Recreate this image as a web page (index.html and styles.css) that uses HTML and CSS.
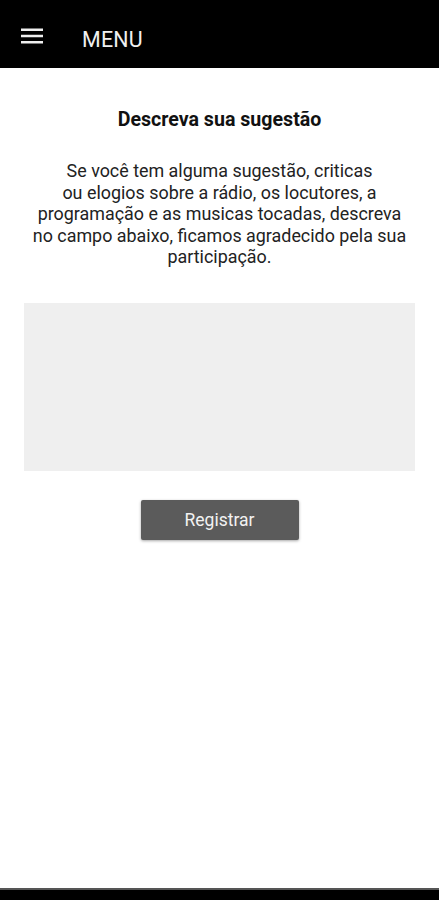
FILE: index.html
```html
<!DOCTYPE html>
<html lang="pt">
<head>
<meta charset="utf-8">
<link rel="stylesheet" href="styles.css">
</head>
<body>
<div class="app">
  <header class="topbar">
    <svg class="menu-icon" width="24" height="24" viewBox="0 0 24 24"><path d="M1 4.5h22v2.6H1zM1 10.7h22v2.6H1zM1 16.9h22v2.6H1z" fill="#eee"/></svg>
    <span class="topbar-title">MENU</span>
  </header>
  <main class="content">
    <h1 class="title">Descreva sua sugestão</h1>
    <p class="desc">Se você tem alguma sugestão, criticas<br>ou elogios sobre a rádio, os locutores, a<br>programação e as musicas tocadas, descreva<br>no campo abaixo, ficamos agradecido pela sua<br>participação.</p>
    <textarea class="field"></textarea>
    <button class="btn">Registrar</button>
  </main>
  <div class="navbar"></div>
</div>
</body>
</html>
```
FILE: styles.css
```css
* { box-sizing: border-box; }
html, body { margin: 0; padding: 0; background: #fff; }
body { font-family: Roboto, "Noto Sans", sans-serif; }
.app { display: flex; flex-direction: column; height: 900px; }
.topbar {
  height: 68px; background: #000; display: flex; align-items: center;
  padding-left: 20px; padding-top: 10px;
}
.menu-icon { display: block; margin-top: -6px; }
.topbar-title { color: #f0f0f0; font-size: 21.4px; margin-left: 38px; letter-spacing: 0.2px; }
.content { flex: 1; display: flex; flex-direction: column; align-items: center; }
.title { font-size: 19.6px; font-weight: 700; color: #111; margin: 40px 0 0; line-height: 24px; }
.desc {
  margin: 28px 0 0; text-align: center; font-size: 17.9px; line-height: 21.6px; color: #222;
}
.field {
  width: 391px; height: 168px; margin-top: 35px; background: #efefef;
  border: none; resize: none; outline: none; display: block;
}
.btn {
  margin-top: 29px; width: 158px; height: 40px; background: #5b5b5b; color: #f2f2f2;
  border: none; border-radius: 2px; font-family: Roboto, sans-serif; font-size: 17.5px;
  box-shadow: 0 1px 3px rgba(0,0,0,0.35);
}
.navbar { height: 12px; background: #000; border-top: 2px solid #555; }
```
